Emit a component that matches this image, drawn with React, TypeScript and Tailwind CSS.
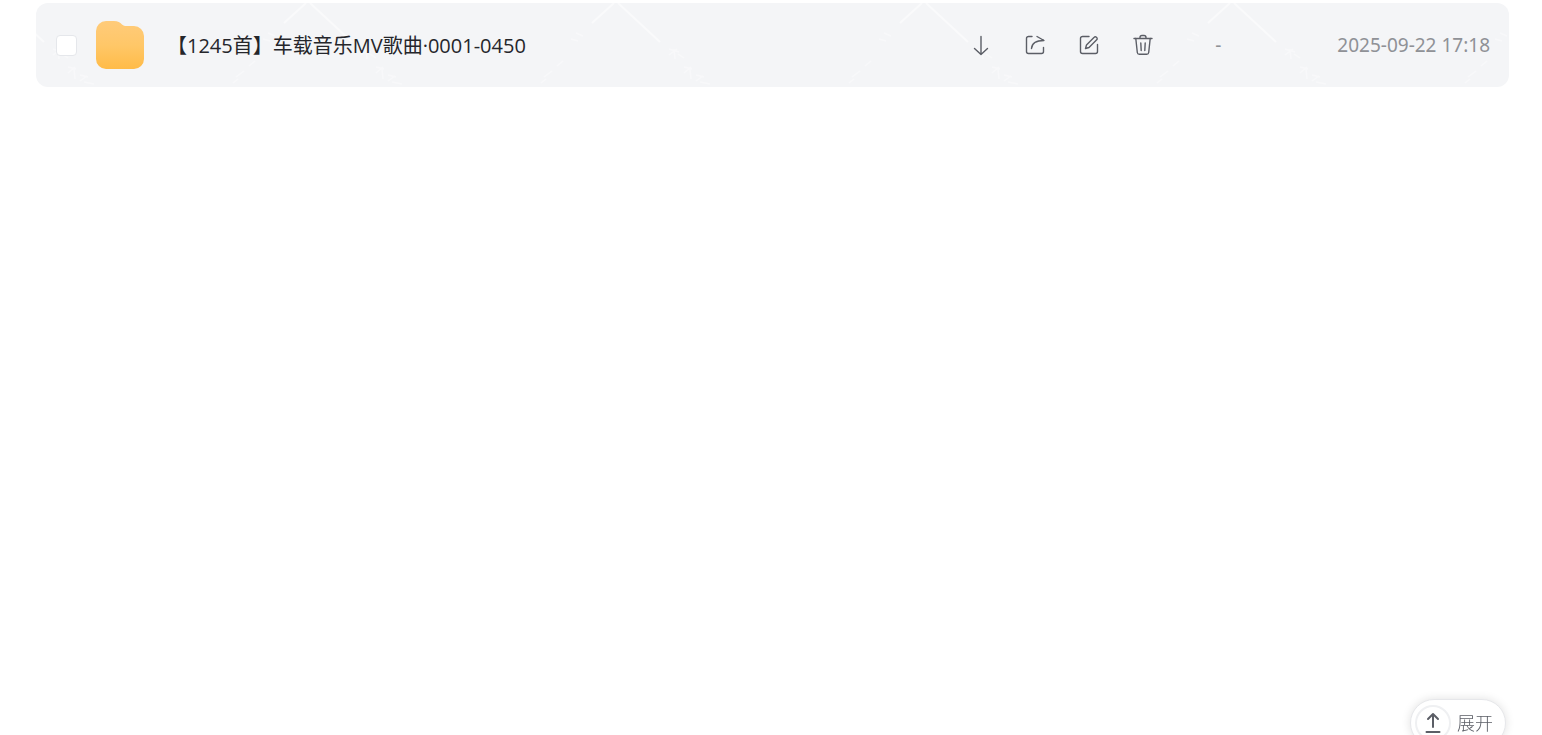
import type { ReactNode } from 'react';

type FileEntry = {
  id: string;
  name: string;
  size: string;
  modified: string;
};

const files: FileEntry[] = [
  { id: 'car-music', name: '【1245首】车载音乐MV歌曲·0001-0450', size: '-', modified: '2025-09-22 17:18' },
];

function Stroke({ children }: { children: ReactNode }) {
  return (
    <svg
      viewBox="0 0 24 24"
      className="size-6"
      fill="none"
      stroke="currentColor"
      strokeWidth="1.4"
      strokeLinecap="round"
      strokeLinejoin="round"
      aria-hidden="true"
    >
      {children}
    </svg>
  );
}

const actions = [
  {
    label: '下载',
    icon: (
      <Stroke>
        <path d="M12 3.500v18M5.500 15.500l6.500 6 6.500-6" />
      </Stroke>
    ),
  },
  {
    label: '分享',
    icon: (
      <Stroke>
        <path d="M9 3.500H5.500A2 2 0 0 0 3.500 5.500V18.500a2 2 0 0 0 2 2h13a2 2 0 0 0 2-2v-4" />
        <path d="M14 3.500 21 7.500C14 7.500 8.800 9.500 8.500 15.500" />
      </Stroke>
    ),
  },
  {
    label: '重命名',
    icon: (
      <Stroke>
        <path d="M12 3.500H5.500A2 2 0 0 0 3.500 5.500V18.500a2 2 0 0 0 2 2h13a2 2 0 0 0 2-2v-7" />
        <path d="M8.500 15.500 9.500 12 17.200 4.300a1.500 1.500 0 0 1 2.200 0l.3.3a1.500 1.500 0 0 1 0 2.200L12 14.500Z" />
      </Stroke>
    ),
  },
  {
    label: '删除',
    icon: (
      <Stroke>
        <path d="M3 5.500h18M9 5.500V4.500A2 2 0 0 1 11 2.500h2A2 2 0 0 1 15 4.500V5.500" />
        <path d="M4.800 5.500 6.300 19.500a2 2 0 0 0 2 1.800h7.400a2 2 0 0 0 2-1.800L19.200 5.500M9.800 10 10.200 17.500M14.200 10 13.800 17.500" />
      </Stroke>
    ),
  },
];

function FolderIcon() {
  return (
    <svg viewBox="0 0 48 48" className="size-12 shrink-0" aria-hidden="true">
      <defs>
        <linearGradient id="folder-fill" x1="0" y1="0" x2="0" y2="1">
          <stop offset="0" stopColor="#ffcb7a" />
          <stop offset="0.5" stopColor="#ffc768" />
          <stop offset="1" stopColor="#ffbb48" />
        </linearGradient>
      </defs>
      <path
        d="M10 0H18C22 0 24 1.500 26 3.500C27.500 4.800 28.500 5 31 5H38A10 10 0 0 1 48 15V38A10 10 0 0 1 38 48H10A10 10 0 0 1 0 38V10A10 10 0 0 1 10 0Z"
        fill="url(#folder-fill)"
      />
    </svg>
  );
}

function Pattern() {
  return (
    <svg className="pointer-events-none absolute inset-0 size-full" aria-hidden="true">
      <defs>
        <pattern id="row-pattern" x="-36" width="308" height="84" patternUnits="userSpaceOnUse">
          <g fill="none" stroke="#ffffff">
            <path d="M284 20 306 0M2 0 44 39" strokeWidth="2" opacity="0.5" />
            <path
              d="M53 46l10 3M53 52l8-6M58 46l1 10M62 51l6 4M68 64l8 2M68 70l7-6M74 66l1 10M80 72l8 2M80 78l7-5M84 79l10 2M275 33l-7-3M270 38l-7-2M255 58l-6 5M244 68l-8 6M238 76l-5 4"
              strokeWidth="1.5"
              opacity="0.35"
            />
          </g>
        </pattern>
      </defs>
      <rect width="100%" height="100%" fill="url(#row-pattern)" />
    </svg>
  );
}

function FileRow({ file }: { file: FileEntry }) {
  return (
    <li className="relative flex h-21 items-center overflow-hidden rounded-xl bg-[#f4f5f7] pr-[19px] pl-5">
      <Pattern />
      <div className="relative flex min-w-0 flex-1 items-center">
        <input
          id={file.id}
          type="checkbox"
          className="mr-[19px] size-[21px] shrink-0 appearance-none rounded border border-[#e5e7eb] bg-white checked:bg-blue-500"
        />
        <FolderIcon />
        <label
          htmlFor={file.id}
          className="ml-[23px] truncate pt-0.5 font-['Open_Sans','Noto_Sans_CJK_SC',sans-serif] text-xl font-[380] text-[#25262b]"
        >
          {file.name}
        </label>
      </div>
      <div className="relative mr-15 flex shrink-0 gap-[30px] text-[#5b5e66]">
        {actions.map((action) => (
          <button key={action.label} type="button" aria-label={action.label} className="cursor-pointer">
            {action.icon}
          </button>
        ))}
      </div>
      <span className="relative w-[122px] shrink-0 text-[19px] text-[#8f9196]">{file.size}</span>
      <time className="relative shrink-0 text-[19px] text-[#8f9196]">{file.modified}</time>
    </li>
  );
}

export default function App() {
  return (
    <main className="min-h-screen bg-white pt-[3px] pr-[33px] pl-9 font-['Noto_Sans','Noto_Sans_CJK_SC',sans-serif]">
      <ul>
        {files.map((file) => (
          <FileRow key={file.id} file={file} />
        ))}
      </ul>
      <button
        type="button"
        className="fixed right-9 -bottom-3 flex h-12 cursor-pointer items-center gap-1.5 rounded-full border border-[#e6e7ea] bg-white pr-3 pl-1 text-lg font-light text-[#5b5e66] shadow-[0_0_10px_rgba(0,0,0,0.12)]"
      >
        <span className="flex size-9 items-center justify-center rounded-full border-2 border-[#eff0f2]">
          <svg
            viewBox="0 0 24 24"
            className="size-6"
            fill="none"
            stroke="currentColor"
            strokeWidth="2"
            strokeLinecap="round"
            strokeLinejoin="round"
            aria-hidden="true"
          >
            <path d="M12 16V3M7 8l5-5 5 5M5.500 21h13" />
          </svg>
        </span>
        展开
      </button>
    </main>
  );
}
